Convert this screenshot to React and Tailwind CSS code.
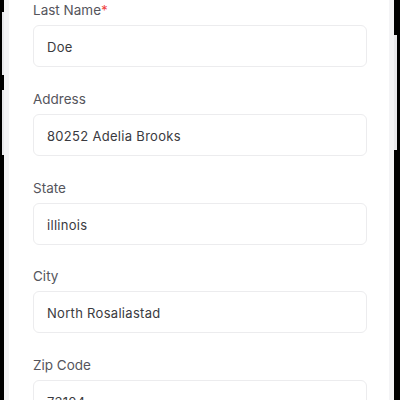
import React from 'react';

const fields = [
  { label: 'Last Name', value: 'Doe', required: true },
  { label: 'Address', value: '80252 Adelia Brooks' },
  { label: 'State', value: 'illinois' },
  { label: 'City', value: 'North Rosaliastad' },
  { label: 'Zip Code', value: '73104' },
];

export default function App() {
  return (
    <div className="w-[400px] h-[400px] bg-black flex overflow-hidden" style={{ fontFamily: 'Inter, "Liberation Sans", sans-serif' }}>
      <div className="w-[4px] flex flex-col">
        <div className="h-[12px]" />
        <div className="h-[63px] ml-[2px] bg-[#e9e9ec]" />
        <div className="h-[15px]" />
        <div className="h-[65px] ml-[2px] bg-[#e9e9ec]" />
      </div>
      <div className="flex-1 bg-[#f4f4f6] px-[5px] overflow-hidden">
        <div className="h-full bg-white pl-[24px] pr-[22px] flex flex-col">
          {fields.map((f) => (
            <div key={f.label} className="flex flex-col shrink-0 mb-[21.75px]">
              <label className="h-[20px] text-[13.5px] leading-[20px] text-[#55555c]">
                {f.label}
                {f.required && <span className="text-[#ef4444]">*</span>}
              </label>
              <input
                readOnly
                value={f.value}
                className="mt-[5px] h-[42px] rounded-[6px] border border-[#ececee] bg-white px-[13px] pt-[2px] text-[13px] tracking-[0.3px] text-[#3a3a40] outline-none"
              />
            </div>
          ))}
        </div>
      </div>
      <div className="w-[6px] flex flex-col">
        <div className="h-[35px]" />
        <div className="h-[115px] w-[3px] bg-[#e9e9ec]" />
      </div>
    </div>
  );
}
